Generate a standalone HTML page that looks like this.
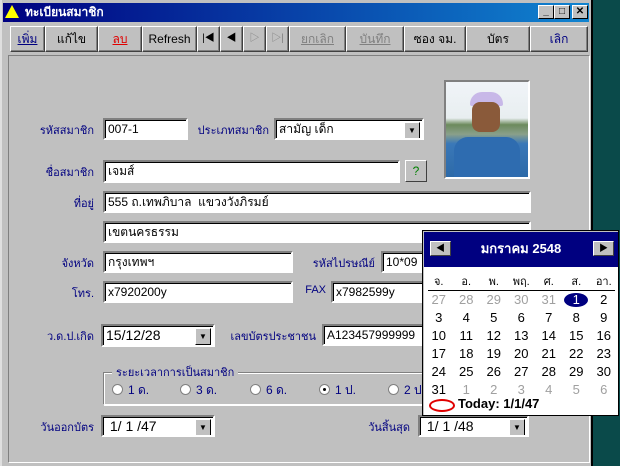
<!DOCTYPE html>
<html><head><meta charset="utf-8"><style>
*{box-sizing:border-box;margin:0;padding:0}
body{width:620px;height:466px;overflow:hidden;background:#0a4a4a;font-family:"Liberation Sans","Noto Sans CJK SC",sans-serif;font-size:12px;position:relative}
.a{position:absolute;white-space:nowrap}
.win{left:0;top:0;width:593px;height:466px;background:#c0c0c0;border-right:2px solid #000;border-left:2px solid #dfdfdf}
.title{left:3px;top:3px;width:586px;height:19px;background:linear-gradient(90deg,#000080,#1084d0);color:#fff;font-weight:bold;font-size:12px;line-height:19px;padding-left:22px}
.tb{top:3px;width:16px;height:14px;background:#c0c0c0;border:1px solid;border-color:#fff #000 #000 #fff;color:#000;font-size:10px;line-height:12px;text-align:center;font-weight:bold}
.btn{top:26px;height:26px;background:#c0c0c0;border:1px solid;border-color:#fff #404040 #404040 #fff;box-shadow:inset -1px -1px #808080;text-align:center;line-height:24px;font-size:12px;color:#000}
.dis{color:#808080;text-decoration:underline}
.panel{left:8px;top:55px;width:582px;height:408px;border:1px solid;border-color:#808080 #fff #fff #808080}
.lbl{color:#000080;font-size:11px;text-align:right}
.in{background:#fff;border:2px solid;border-color:#808080 #fff #fff #808080;box-shadow:inset 1px 1px #000;font-size:12px;padding:2px 3px;line-height:15px;color:#000;white-space:nowrap;overflow:hidden}
.dd{position:absolute;right:2px;top:2px;width:16px;height:17px;background:#c0c0c0;border:1px solid;border-color:#fff #000 #000 #fff;font-size:8px;text-align:center;line-height:15px}
.cal td{text-align:center;width:27.5px;height:18px;font-size:13px;color:#000}
.cal td.g{color:#a0a0a0}
.rad{display:inline-block;width:11px;height:11px;border-radius:50%;background:#fff;border:1px solid #808080;vertical-align:-1px;margin-right:5px;position:relative}
</style></head><body>
<div class="a win"></div>
<div class="a title">ทะเบียนสมาชิก</div>
<div class="a" style="left:5px;top:5px;width:0;height:0;border-left:7px solid transparent;border-right:7px solid transparent;border-bottom:13px solid #ff0"></div>
<div class="a tb" style="left:538px;top:5px">_</div>
<div class="a tb" style="left:554px;top:5px">□</div>
<div class="a tb" style="left:572px;top:5px">✕</div>

<div class="a btn" style="left:10px;width:35px;color:#000080;text-decoration:underline">เพิ่ม</div>
<div class="a btn" style="left:45px;width:53px">แก้ไข</div>
<div class="a btn" style="left:98px;width:44px;color:#e00000;text-decoration:underline">ลบ</div>
<div class="a btn" style="left:142px;width:55px">Refresh</div>
<div class="a btn" style="left:197px;width:23px;font-size:10px">|◀</div>
<div class="a btn" style="left:220px;width:23px;font-size:10px">◀</div>
<div class="a btn" style="left:243px;width:23px;color:#808080;font-size:10px">▷</div>
<div class="a btn" style="left:266px;width:23px;color:#808080;font-size:10px">▷|</div>
<div class="a btn dis" style="left:289px;width:57px">ยกเลิก</div>
<div class="a btn dis" style="left:346px;width:58px">บันทึก</div>
<div class="a btn" style="left:404px;width:62px">ซอง จม.</div>
<div class="a btn" style="left:466px;width:64px">บัตร</div>
<div class="a btn" style="left:530px;width:58px;color:#000080">เลิก</div>

<div class="a panel"></div>
<div class="a" style="left:444px;top:80px;width:86px;height:99px;border:2px solid;border-color:#808080 #fff #fff #808080;background:linear-gradient(180deg,#f0f4f8 0%,#e8eef0 38%,#6c8a5c 45%,#8aa08a 55%,#3a78b8 65%,#2d6aa8 100%)">
<div class="a" style="left:24px;top:10px;width:33px;height:14px;border-radius:12px 12px 2px 2px;background:#c8b8e8"></div>
<div class="a" style="left:26px;top:20px;width:28px;height:30px;border-radius:8px;background:#8a5a3a"></div>
<div class="a" style="left:8px;top:55px;width:66px;height:40px;border-radius:14px 14px 0 0;background:#2e6cb0"></div>
</div>

<div class="a lbl" style="left:20px;top:121px;width:74px">รหัสสมาชิก</div>
<div class="a in" style="left:103px;top:118px;width:85px;height:22px">007-1</div>
<div class="a lbl" style="left:195px;top:121px;width:74px">ประเภทสมาชิก</div>
<div class="a in" style="left:274px;top:118px;width:150px;height:22px">สามัญ เด็ก<div class="dd">▼</div></div>

<div class="a lbl" style="left:20px;top:163px;width:74px">ชื่อสมาชิก</div>
<div class="a in" style="left:103px;top:160px;width:297px;height:23px">เจมส์</div>
<div class="a" style="left:405px;top:160px;width:22px;height:22px;background:#c0c0c0;border:1px solid;border-color:#fff #404040 #404040 #fff;color:#008000;text-align:center;line-height:20px">?</div>

<div class="a lbl" style="left:20px;top:194px;width:74px">ที่อยู่</div>
<div class="a in" style="left:103px;top:191px;width:428px;height:22px">555 ถ.เทพภิบาล&nbsp; แขวงวังภิรมย์</div>
<div class="a in" style="left:103px;top:221px;width:428px;height:22px">เขตนครธรรม</div>

<div class="a lbl" style="left:20px;top:254px;width:74px">จังหวัด</div>
<div class="a in" style="left:103px;top:251px;width:190px;height:22px">กรุงเทพฯ</div>
<div class="a lbl" style="left:295px;top:254px;width:80px">รหัสไปรษณีย์</div>
<div class="a in" style="left:381px;top:251px;width:60px;height:22px">10*09</div>

<div class="a lbl" style="left:20px;top:284px;width:74px">โทร.</div>
<div class="a in" style="left:103px;top:281px;width:190px;height:22px">x7920200y</div>
<div class="a lbl" style="left:290px;top:284px;width:36px">FAX</div>
<div class="a in" style="left:331px;top:281px;width:110px;height:22px">x7982599y</div>

<div class="a lbl" style="left:20px;top:327px;width:74px">ว.ด.ป.เกิด</div>
<div class="a in" style="left:101px;top:324px;width:114px;height:23px;font-size:14px">15/12/28<div class="dd">▼</div></div>
<div class="a lbl" style="left:222px;top:327px;width:94px">เลขบัตรประชาชน</div>
<div class="a in" style="left:322px;top:324px;width:120px;height:22px">A123457999999</div>

<div class="a" style="left:103px;top:372px;width:340px;height:33px;border:1px solid;border-color:#808080 #fff #fff #808080;box-shadow:1px 1px #fff,inset 1px 1px #fff"></div>
<div class="a" style="left:112px;top:363px;background:#c0c0c0;color:#000080;padding:0 4px;font-size:11px">ระยะเวลาการเป็นสมาชิก</div>
<div class="a" style="left:112px;top:381px;color:#000080"><span class="rad"></span>1 ด.</div>
<div class="a" style="left:180px;top:381px;color:#000080"><span class="rad"></span>3 ด.</div>
<div class="a" style="left:250px;top:381px;color:#000080"><span class="rad"></span>6 ด.</div>
<div class="a" style="left:319px;top:381px;color:#000080"><span class="rad"><span class="a" style="left:3px;top:3px;width:3px;height:3px;background:#000;border-radius:50%"></span></span>1 ป.</div>
<div class="a" style="left:388px;top:381px;color:#000080"><span class="rad"></span>2 ป.</div>

<div class="a lbl" style="left:20px;top:418px;width:74px">วันออกบัตร</div>
<div class="a in" style="left:101px;top:415px;width:114px;height:22px;font-size:14px">&nbsp;1/ 1 /47<div class="dd">▼</div></div>
<div class="a lbl" style="left:340px;top:418px;width:70px">วันสิ้นสุด</div>
<div class="a in" style="left:418px;top:415px;width:111px;height:22px;font-size:14px">&nbsp;1/ 1 /48<div class="dd">▼</div></div>

<div class="a" style="left:422px;top:230px;width:197px;height:186px;background:#fff;border:1px solid #000;box-shadow:inset 1px 1px #c0c0c0">
<div class="a" style="left:1px;top:1px;width:194px;height:35px;background:#000080;color:#fff;font-weight:bold;font-size:13px;text-align:center;line-height:34px">มกราคม 2548</div>
<div class="a" style="left:7px;top:10px;width:21px;height:15px;background:#c0c0c0;border:1px solid;border-color:#fff #404040 #404040 #fff;font-size:9px;text-align:center;line-height:13px">◀</div>
<div class="a" style="left:170px;top:10px;width:21px;height:15px;background:#c0c0c0;border:1px solid;border-color:#fff #404040 #404040 #fff;font-size:9px;text-align:center;line-height:13px">▶</div>
<div class="a" style="left:5px;top:59px;width:187px;height:1px;background:#000"></div>
<table class="a cal" style="left:2px;top:41px;border-collapse:collapse">
<tr><td style="font-size:11px">จ.</td><td style="font-size:11px">อ.</td><td style="font-size:11px">พ.</td><td style="font-size:11px">พฤ.</td><td style="font-size:11px">ศ.</td><td style="font-size:11px">ส.</td><td style="font-size:11px">อา.</td></tr>
<tr><td class="g">27</td><td class="g">28</td><td class="g">29</td><td class="g">30</td><td class="g">31</td><td><span style="display:inline-block;width:24px;height:14px;border-radius:50%;background:#000080;color:#fff;line-height:14px">1</span></td><td>2</td></tr>
<tr><td>3</td><td>4</td><td>5</td><td>6</td><td>7</td><td>8</td><td>9</td></tr>
<tr><td>10</td><td>11</td><td>12</td><td>13</td><td>14</td><td>15</td><td>16</td></tr>
<tr><td>17</td><td>18</td><td>19</td><td>20</td><td>21</td><td>22</td><td>23</td></tr>
<tr><td>24</td><td>25</td><td>26</td><td>27</td><td>28</td><td>29</td><td>30</td></tr>
<tr><td>31</td><td class="g">1</td><td class="g">2</td><td class="g">3</td><td class="g">4</td><td class="g">5</td><td class="g">6</td></tr>
</table>
<div class="a" style="left:6px;top:168px;width:26px;height:13px;border:2px solid #e00000;border-radius:50%"></div>
<div class="a" style="left:35px;top:165px;font-weight:bold;font-size:13px;color:#000">Today: 1/1/47</div>
</div>
</body></html>
